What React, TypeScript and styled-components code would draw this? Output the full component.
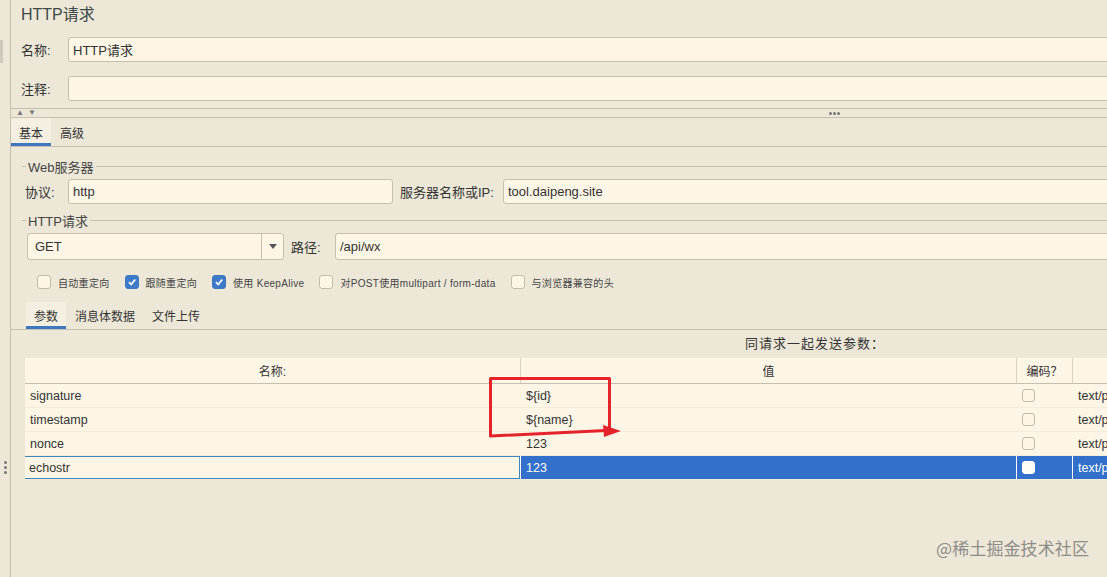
import React from "react";
import styled, { createGlobalStyle, css } from "styled-components";

const Global = createGlobalStyle`
  html, body { margin: 0; padding: 0; background: #ECE7D7; }
  * { box-sizing: border-box; }
`;

const BG = "#ECE7D7";
const FIELD = "#FDF6E6";
const LINE = "#C6BEAE";
const BLUE = "#3370CC";

const Page = styled.div`
  width: 1107px;
  height: 577px;
  display: flex;
  background: ${BG};
  overflow: hidden;
  position: relative;
  font-family: "Liberation Sans", "Noto Sans CJK SC", sans-serif;
  color: #333;
  font-size: 13px;
`;

const Gutter = styled.div`
  width: 11px;
  flex-shrink: 0;
  border-right: 1px solid ${LINE};
  display: flex;
  flex-direction: column;
`;

const GutterTab = styled.div`
  width: 3px;
  height: 23px;
  margin-top: 40px;
  background: #CFC9BB;
`;

const GutterDots = styled.div`
  margin-top: 398px;
  margin-left: 4px;
  display: flex;
  flex-direction: column;
  gap: 2px;
  span {
    width: 3px;
    height: 3px;
    border-radius: 50%;
    background: #777;
  }
`;

const Main = styled.div`
  flex: 1;
  min-width: 0;
  overflow: hidden;
  display: flex;
  flex-direction: column;
`;

const Title = styled.div`
  height: 30px;
  line-height: 29px;
  padding-left: 10px;
  font-size: 16px;
  color: #3d4848;
`;

const FieldList = styled.div`
  margin-top: 7px;
  display: flex;
  flex-direction: column;
  gap: 14px;
  padding-left: 10px;
`;

const Row = styled.div<{ $h?: number }>`
  display: flex;
  align-items: center;
  height: ${(p) => p.$h ?? 25}px;
`;

const Label = styled.div<{ $w: number; $ml?: number }>`
  width: ${(p) => p.$w}px;
  margin-left: ${(p) => p.$ml ?? 0}px;
  flex-shrink: 0;
  white-space: nowrap;
  color: #333;
`;

const Input = styled.div<{ $w?: number }>`
  height: 100%;
  ${(p) =>
    p.$w
      ? css`width: ${p.$w}px; flex-shrink: 0;`
      : css`flex: 1; margin-right: -30px;`}
  background: ${FIELD};
  border: 1px solid ${LINE};
  border-radius: 3px;
  padding-left: 4px;
  display: flex;
  align-items: center;
  color: #333;
  white-space: nowrap;
`;

const Divider = styled.div`
  margin-top: 7px;
  height: 10px;
  border-top: 1px solid ${LINE};
  border-bottom: 1px solid ${LINE};
  display: flex;
  align-items: center;
  padding-left: 5px;
`;

const Arrows = styled.div`
  display: flex;
  gap: 4px;
  font-size: 8px;
  color: #777;
  line-height: 1;
`;

const SplitDots = styled.div`
  margin-left: 793px;
  display: flex;
  gap: 1px;
  span {
    width: 3px;
    height: 3px;
    border-radius: 50%;
    background: #777;
  }
`;

const TabBar = styled.div<{ $inset?: number }>`
  display: flex;
  height: 29px;
  border-bottom: 1px solid ${LINE};
  padding-left: ${(p) => p.$inset ?? 0}px;
  flex-shrink: 0;
`;

const Tab = styled.div<{ $active?: boolean }>`
  padding: 3px 8px 0;
  display: flex;
  align-items: center;
  font-size: 12px;
  color: #333;
  border-bottom: 3px solid ${(p) => (p.$active ? "#3D78C0" : "transparent")};
  background: ${(p) => (p.$active ? "#F4EFE0" : "transparent")};
  margin-right: 1px;
`;

const TabBody = styled.div`
  padding-left: 11px;
  display: flex;
  flex-direction: column;
`;

const GroupTitle = styled.div<{ $mt: number }>`
  margin-top: ${(p) => p.$mt}px;
  height: 16px;
  display: flex;
  align-items: center;
  gap: 2px;
  color: #444;
  font-size: 13px;
  &::before {
    content: "";
    width: 4px;
    border-top: 1px solid ${LINE};
  }
  &::after {
    content: "";
    flex: 1;
    border-top: 1px solid ${LINE};
  }
`;

const GroupRow = styled(Row)<{ $mt: number }>`
  margin-top: ${(p) => p.$mt}px;
`;

const Combo = styled.div`
  width: 257px;
  height: 100%;
  margin-left: 5px;
  flex-shrink: 0;
  display: flex;
  background: ${FIELD};
  border: 1px solid ${LINE};
  border-radius: 3px;
`;

const ComboText = styled.div`
  flex: 1;
  display: flex;
  align-items: center;
  padding-left: 7px;
`;

const ComboArrow = styled.div`
  width: 22px;
  border-left: 1px solid ${LINE};
  display: flex;
  align-items: center;
  justify-content: center;
  &::after {
    content: "";
    border-left: 4px solid transparent;
    border-right: 4px solid transparent;
    border-top: 5px solid #555;
  }
`;

const CheckRow = styled.div`
  margin-top: 15px;
  height: 14px;
  display: flex;
  align-items: center;
  padding-left: 15px;
  font-size: 10px;
  letter-spacing: 0.3px;
  color: #444;
`;

const CheckItem = styled.div`
  display: flex;
  align-items: center;
  gap: 7px;
  margin-right: 15px;
  white-space: nowrap;
`;

const Box = styled.div<{ $checked?: boolean; $size?: number; $white?: boolean }>`
  width: ${(p) => p.$size ?? 14}px;
  height: ${(p) => p.$size ?? 14}px;
  flex-shrink: 0;
  border-radius: 3px;
  border: 1px solid ${(p) => (p.$checked ? "#3D78C0" : p.$white ? "#fff" : "#C2BAAA")};
  background: ${(p) => (p.$checked ? "#3D7BC8" : p.$white ? "#FFFDF6" : FIELD)};
  display: flex;
  align-items: center;
  justify-content: center;
`;

const SubTabs = styled(TabBar)`
  margin-top: 13px;
  margin-left: -11px;
  height: 28px;
`;

const Caption = styled.div`
  height: 28px;
  line-height: 28px;
  padding-left: 745px;
  margin-left: -22px;
  font-size: 13px;
  letter-spacing: 1px;
  color: #333;
  white-space: nowrap;
`;

const Table = styled.div`
  margin-left: 3px;
  width: 1160px;
  display: flex;
  flex-direction: column;
`;

const TRow = styled.div<{ $head?: boolean }>`
  display: grid;
  grid-template-columns: 495px 496px 56px 113px;
  height: ${(p) => (p.$head ? 26 : 24)}px;
  background: ${FIELD};
  border-bottom: 1px solid ${(p) => (p.$head ? LINE : "#F3ECDB")};
`;

const Cell = styled.div<{ $head?: boolean; $sel?: boolean; $focus?: boolean }>`
  display: flex;
  align-items: center;
  justify-content: ${(p) => (p.$head ? "center" : "flex-start")};
  padding-left: ${(p) => (p.$head ? 0 : 5)}px;
  border-left: 1px solid ${(p) => (p.$head ? "#D9D1C0" : p.$sel ? "#fff" : "transparent")};
  &:first-child { border-left: none; }
  background: ${(p) => (p.$sel ? BLUE : "transparent")};
  color: ${(p) => (p.$sel ? "#fff" : "#333")};
  font-size: ${(p) => (p.$head ? 12 : 12.5)}px;
  white-space: nowrap;
  overflow: hidden;
  ${(p) =>
    p.$focus &&
    css`
      border: 1px solid #3F86BD;
      padding-left: 4px;
    `}
`;

const Annotation = styled.svg`
  position: absolute;
  left: 0;
  top: 0;
  pointer-events: none;
`;

const Watermark = styled.div`
  position: absolute;
  right: 18px;
  bottom: 17px;
  font-size: 17px;
  color: #8E8D89;
  letter-spacing: 0.1px;
  font-family: "Noto Sans CJK SC", sans-serif;
`;

const Check = () => (
  <svg width="10" height="10" viewBox="0 0 10 10">
    <path d="M2 5.2 L4.2 7.5 L8.2 2.5" stroke="#fff" strokeWidth="1.8" fill="none" />
  </svg>
);

const rows = [
  { name: "signature", value: "${id}" },
  { name: "timestamp", value: "${name}" },
  { name: "nonce", value: "123" },
  { name: "echostr", value: "123", sel: true },
];

export default function App() {
  return (
    <Page>
      <Global />
      <Gutter>
        <GutterTab />
        <GutterDots>
          <span />
          <span />
          <span />
        </GutterDots>
      </Gutter>
      <Main>
        <Title>HTTP请求</Title>
        <FieldList>
          <Row>
            <Label $w={47}>名称:</Label>
            <Input>HTTP请求</Input>
          </Row>
          <Row>
            <Label $w={47}>注释:</Label>
            <Input />
          </Row>
        </FieldList>
        <Divider>
          <Arrows>
            <span>▲</span>
            <span>▼</span>
          </Arrows>
          <SplitDots>
            <span />
            <span />
            <span />
          </SplitDots>
        </Divider>
        <TabBar>
          <Tab $active>基本</Tab>
          <Tab>高级</Tab>
        </TabBar>
        <TabBody>
          <GroupTitle $mt={11}>Web服务器</GroupTitle>
          <GroupRow $mt={5}>
            <Label $w={43} $ml={3}>协议:</Label>
            <Input $w={325}>http</Input>
            <Label $w={103} $ml={7}>服务器名称或IP:</Label>
            <Input>tool.daipeng.site</Input>
          </GroupRow>
          <GroupTitle $mt={8}>HTTP请求</GroupTitle>
          <GroupRow $mt={5} $h={27}>
            <Combo>
              <ComboText>GET</ComboText>
              <ComboArrow />
            </Combo>
            <Label $w={44} $ml={7}>路径:</Label>
            <Input>/api/wx</Input>
          </GroupRow>
          <CheckRow>
            <CheckItem>
              <Box />
              自动重定向
            </CheckItem>
            <CheckItem>
              <Box $checked>
                <Check />
              </Box>
              跟随重定向
            </CheckItem>
            <CheckItem>
              <Box $checked>
                <Check />
              </Box>
              使用 KeepAlive
            </CheckItem>
            <CheckItem>
              <Box />
              对POST使用multipart / form-data
            </CheckItem>
            <CheckItem>
              <Box />
              与浏览器兼容的头
            </CheckItem>
          </CheckRow>
          <SubTabs $inset={15}>
            <Tab $active>参数</Tab>
            <Tab>消息体数据</Tab>
            <Tab>文件上传</Tab>
          </SubTabs>
          <Caption>同请求一起发送参数：</Caption>
          <Table>
            <TRow $head>
              <Cell $head>名称:</Cell>
              <Cell $head>值</Cell>
              <Cell $head>编码？</Cell>
              <Cell $head />
            </TRow>
            {rows.map((r) => (
              <TRow key={r.name}>
                <Cell $focus={r.sel}>{r.name}</Cell>
                <Cell $sel={r.sel}>{r.value}</Cell>
                <Cell $sel={r.sel}>
                  <Box $size={13} $white={r.sel} />
                </Cell>
                <Cell $sel={r.sel}>text/plain</Cell>
              </TRow>
            ))}
          </Table>
        </TabBody>
      </Main>
      <Annotation width="1107" height="577" viewBox="0 0 1107 577">
        <path
          d="M609.5 429 L609.5 378.5 L490.5 378.5 L490.5 436 L606 430.5"
          fill="none"
          stroke="#E5232B"
          strokeWidth="3"
          strokeLinejoin="round"
        />
        <path d="M603 425 L621 431 L604 437 Z" fill="#E5232B" />
      </Annotation>
      <Watermark>@稀土掘金技术社区</Watermark>
    </Page>
  );
}
